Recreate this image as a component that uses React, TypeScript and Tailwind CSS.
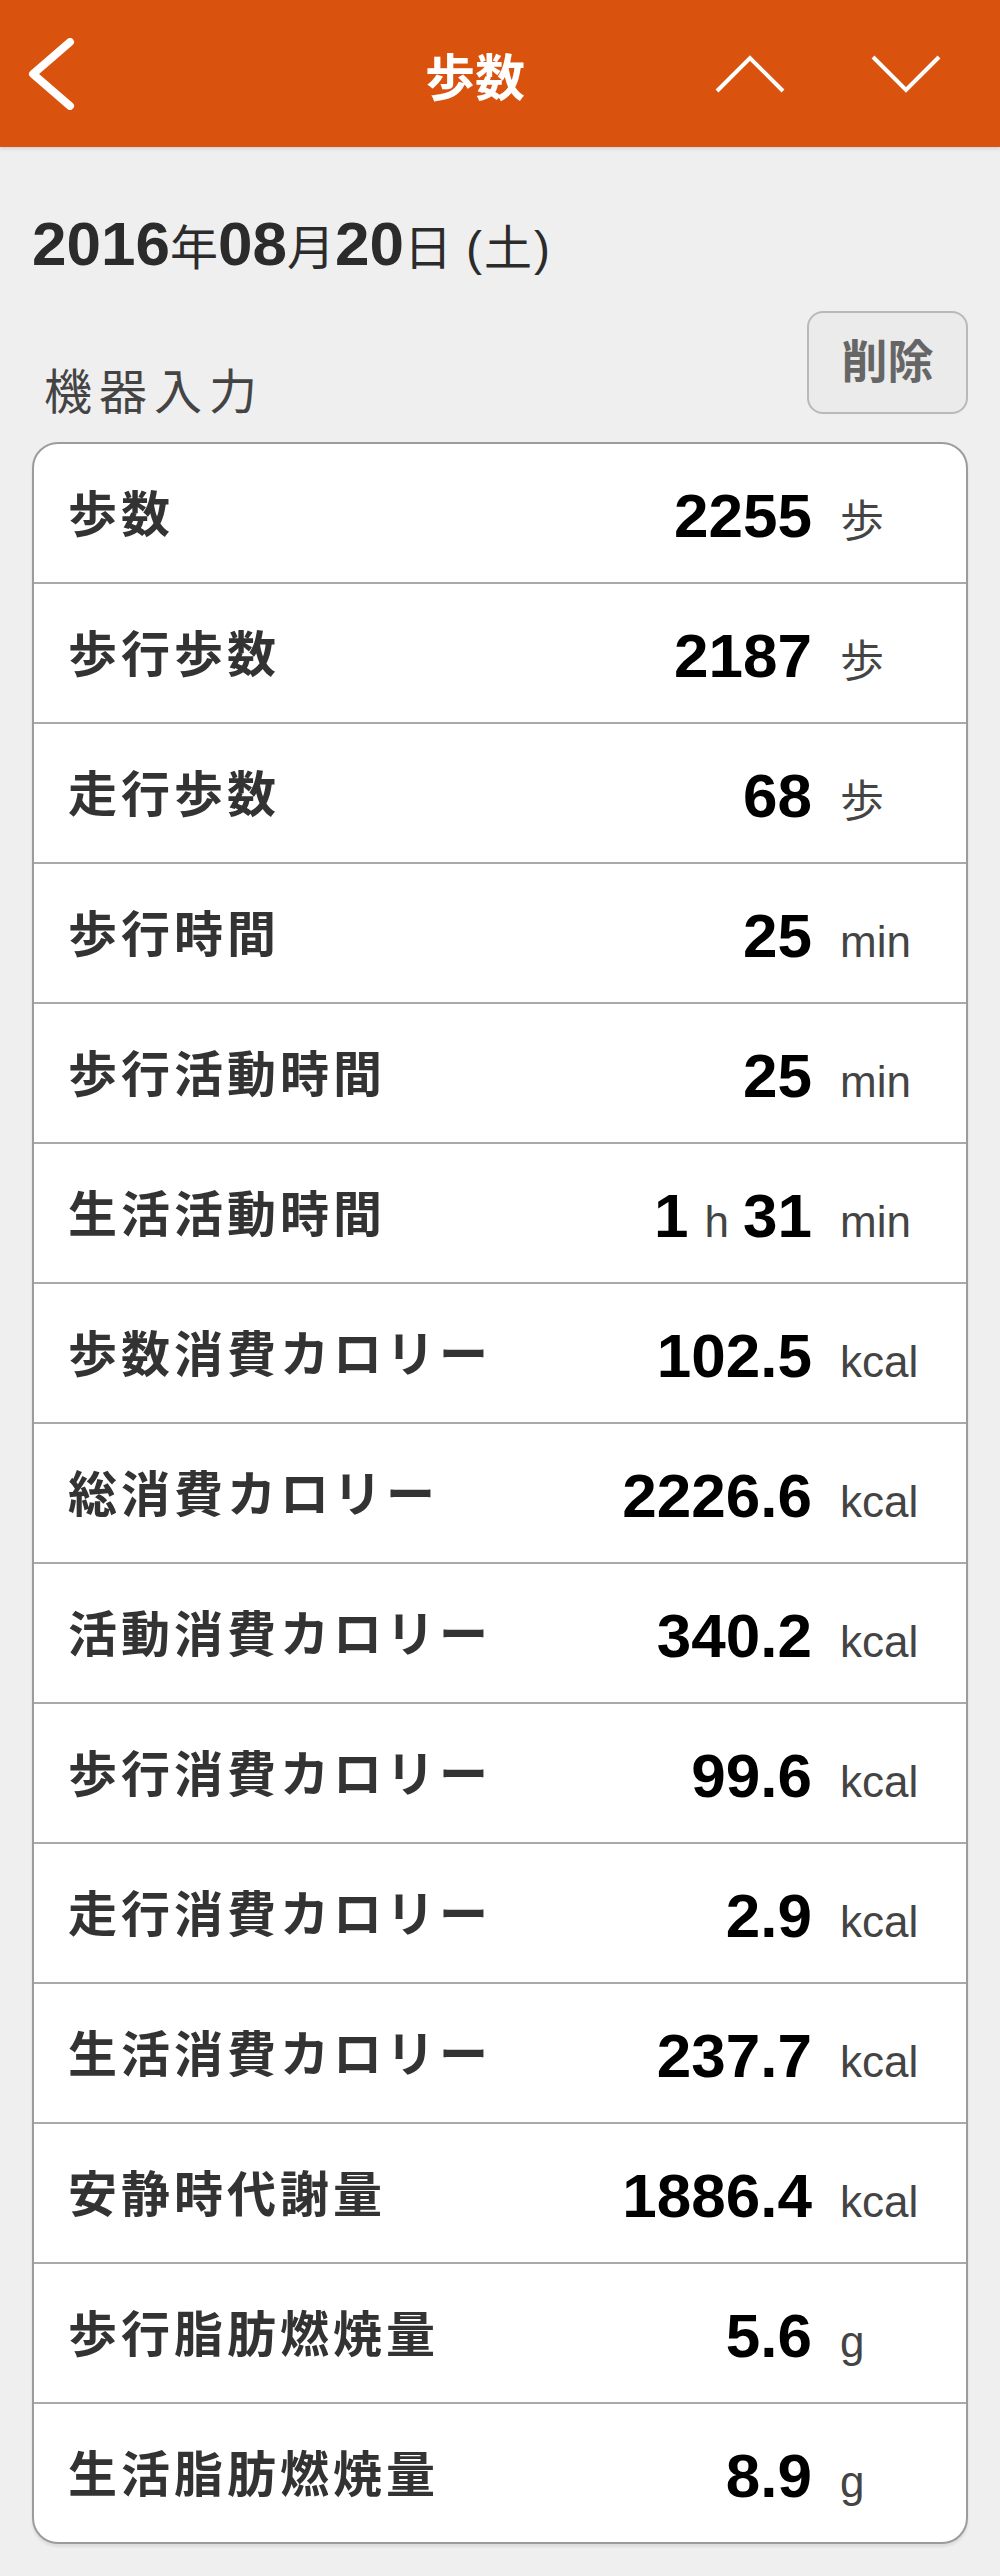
import React from "react";

type Row = { label: string; value: React.ReactNode; unit: string };

const rows: Row[] = [
  { label: "歩数", value: "2255", unit: "歩" },
  { label: "歩行歩数", value: "2187", unit: "歩" },
  { label: "走行歩数", value: "68", unit: "歩" },
  { label: "歩行時間", value: "25", unit: "min" },
  { label: "歩行活動時間", value: "25", unit: "min" },
  {
    label: "生活活動時間",
    value: (
      <>
        <span>1</span>
        <span className="ml-[16px] mr-[14px] text-[44px] font-normal text-[#444]">h</span>
        <span>31</span>
      </>
    ),
    unit: "min",
  },
  { label: "歩数消費カロリー", value: "102.5", unit: "kcal" },
  { label: "総消費カロリー", value: "2226.6", unit: "kcal" },
  { label: "活動消費カロリー", value: "340.2", unit: "kcal" },
  { label: "歩行消費カロリー", value: "99.6", unit: "kcal" },
  { label: "走行消費カロリー", value: "2.9", unit: "kcal" },
  { label: "生活消費カロリー", value: "237.7", unit: "kcal" },
  { label: "安静時代謝量", value: "1886.4", unit: "kcal" },
  { label: "歩行脂肪燃焼量", value: "5.6", unit: "g" },
  { label: "生活脂肪燃焼量", value: "8.9", unit: "g" },
];

function Header() {
  return (
    <header className="flex h-[147px] items-center bg-[#d9530f] shadow-[0_2px_3px_rgba(0,0,0,0.12)]">
      {/* back */}
      <div className="flex w-[278px] items-center pl-[27px]">
        <svg width="48" height="72" viewBox="0 0 48 72">
          <polyline points="43,4 6,36 43,68" fill="none" stroke="#fff" strokeWidth="8" strokeLinecap="round" strokeLinejoin="round" />
        </svg>
      </div>
      <h1 className="flex-1 text-center font-['Noto_Sans_CJK_JP',sans-serif] text-[50px] font-bold leading-none text-white">
        歩数
      </h1>
      {/* prev / next day */}
      <div className="flex w-[328px] pr-[16px]">
        <button className="flex h-[100px] w-[156px] items-center justify-center">
          <svg width="70" height="40" viewBox="0 0 70 40">
            <polyline points="2,37 35,4 68,37" fill="none" stroke="#fff" strokeWidth="4" />
          </svg>
        </button>
        <button className="flex h-[100px] w-[156px] items-center justify-center">
          <svg width="70" height="40" viewBox="0 0 70 40">
            <polyline points="2,3 35,36 68,3" fill="none" stroke="#fff" strokeWidth="4" />
          </svg>
        </button>
      </div>
    </header>
  );
}

function DateLine() {
  return (
    <div className="flex items-baseline pt-[66px] leading-none text-[#2b2b2b]">
      <span className="text-[62px] font-bold">2016</span>
      <span className="text-[48px]">年</span>
      <span className="text-[62px] font-bold">08</span>
      <span className="text-[48px]">月</span>
      <span className="text-[62px] font-bold">20</span>
      <span className="text-[48px]">日</span>
      <span className="ml-[14px] text-[48px] tracking-[2px]">(土)</span>
    </div>
  );
}

export default function App() {
  return (
    <main className="min-h-[2576px] w-[1000px] bg-[#efefef] font-['Liberation_Sans','Noto_Sans_CJK_JP',sans-serif]">
      <Header />
      <section className="px-[32px]">
        <DateLine />

        <div className="mt-[36px] flex items-end justify-between">
          <span className="mb-[-3px] ml-[12px] text-[48px] leading-none tracking-[7px] text-[#444]">
            機器入力
          </span>
          <button className="flex h-[103px] w-[161px] items-center justify-center rounded-[16px] border-2 border-[#b9b9b9] bg-[#ebebeb] text-[46px] font-bold text-[#666]">
            削除
          </button>
        </div>

        <div className="mt-[28px] overflow-hidden rounded-[26px] border-2 border-[#9c9c9c] bg-white shadow-[0_3px_3px_rgba(0,0,0,0.08)]">
          {rows.map((r, i) => (
            <div
              key={r.label}
              className={`flex items-center ${i === 0 ? "h-[138px]" : "h-[140px] border-t-2 border-[#a9a9a9]"}`}
            >
              <span className="flex-1 pl-[34px] pt-[4px] text-[49px] font-bold leading-none tracking-[4px] text-[#333]">
                {r.label}
              </span>
              <div className="flex items-baseline pt-[6px]">
                <span className="mr-[28px] flex items-baseline text-[62px] font-bold leading-none text-black">
                  {r.value}
                </span>
                <span className="w-[126px] text-[44px] leading-none text-[#444]">{r.unit}</span>
              </div>
            </div>
          ))}
        </div>
      </section>
    </main>
  );
}
